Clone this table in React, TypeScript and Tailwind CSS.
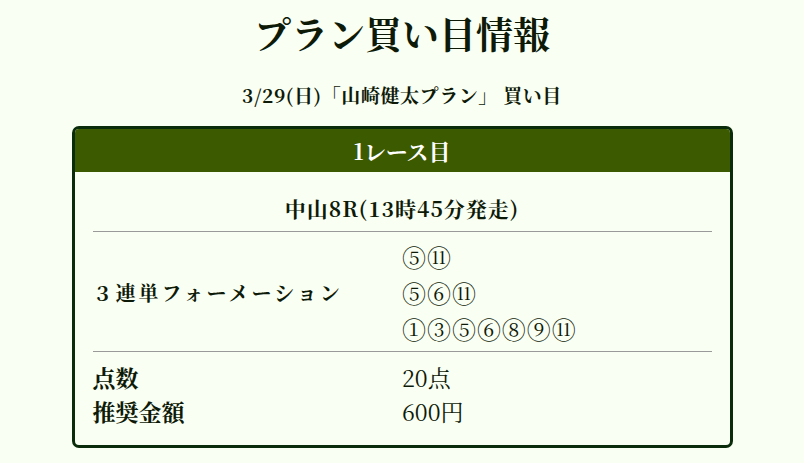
import React from "react";

const font = {
  fontFamily: '"Noto Serif CJK JP", "Liberation Serif", "Noto Sans CJK JP", serif',
};

export default function App() {
  return (
    <div
      className="min-h-[463px] w-full bg-[#fafff3] text-[#0e1a08]"
      style={font}
    >
      <h1 className="pt-[10px] text-center text-[37px] font-bold leading-[46px]">
        プラン買い目情報
      </h1>
      <p className="mt-[26px] text-center text-[19px] font-bold leading-[26px] tracking-[0.03em]">
        3/29(日)「山崎健太プラン」 買い目
      </p>
      <div className="mx-auto mt-[18px] w-[661px] overflow-hidden rounded-[7px] border-[3px] border-[#0a2c0a] bg-[#fafff3]">
        <div className="flex h-[43px] items-center justify-center bg-[#3c5a00] text-[22px] font-bold text-white">
          1レース目
        </div>
        <div className="px-[18px]">
          <div className="pt-[24px] pb-[11px] text-center text-[21px] font-bold leading-[24px] tracking-[1px]">
            中山8R(13時45分発走)
          </div>
          <div className="border-t border-[#9a9a9a]" />
          <div className="grid grid-cols-2 pt-[7px] pb-[4px]">
            <div className="flex items-center text-[20px] font-bold tracking-[0.15em]">
              ３連単フォーメーション
            </div>
            <div className="text-[24px] leading-[36px] tracking-[0.04em]">
              <div>⑤⑪</div>
              <div>⑤⑥⑪</div>
              <div>①③⑤⑥⑧⑨⑪</div>
            </div>
          </div>
          <div className="border-t border-[#9a9a9a]" />
          <div className="grid grid-cols-2 pt-[9px] pb-[16px] text-[23px] leading-[34px]">
            <div className="font-bold">点数</div>
            <div>20点</div>
            <div className="font-bold">推奨金額</div>
            <div>600円</div>
          </div>
        </div>
      </div>
    </div>
  );
}
